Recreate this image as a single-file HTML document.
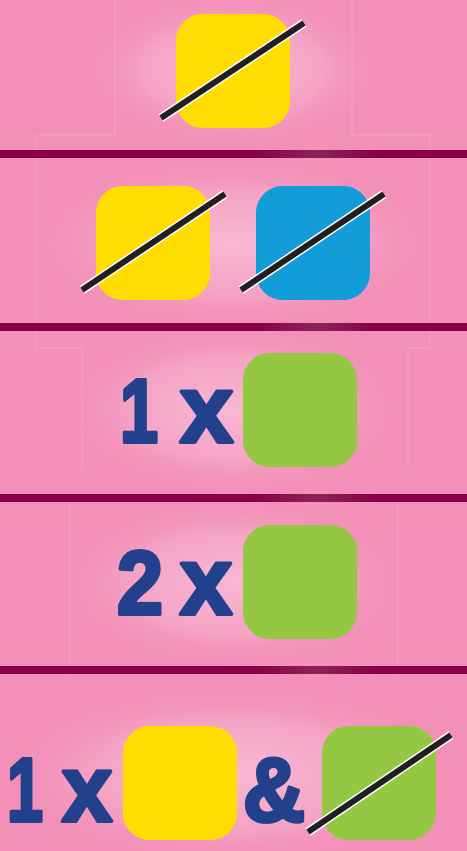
<!DOCTYPE html>
<html><head><style>
html,body{margin:0;padding:0;width:467px;height:851px;overflow:hidden;background:#f390b8}
svg{display:block}
</style></head><body>
<svg width="467" height="851" viewBox="0 0 467 851" xmlns="http://www.w3.org/2000/svg">
<defs>
<radialGradient id="g" cx="0.5" cy="0.5" r="0.5">
<stop offset="0" stop-color="#f8b8d2"/><stop offset="0.6" stop-color="#f5a3c5"/><stop offset="1" stop-color="#f390b8" stop-opacity="0"/>
</radialGradient>
<linearGradient id="bar" x1="0" x2="1">
<stop offset="0" stop-color="#8a0048"/><stop offset="0.55" stop-color="#8a0048"/><stop offset="0.68" stop-color="#8c2358"/><stop offset="0.8" stop-color="#8a0048"/><stop offset="1" stop-color="#8a0048"/>
</linearGradient>
</defs>
<rect width="467" height="851" fill="#f390b8"/>
<ellipse cx="233" cy="70" rx="150" ry="75" fill="url(#g)"/>
<ellipse cx="233" cy="243" rx="200" ry="85" fill="url(#g)"/>
<ellipse cx="233" cy="410" rx="170" ry="85" fill="url(#g)"/>
<ellipse cx="233" cy="583" rx="170" ry="85" fill="url(#g)"/>
<ellipse cx="233" cy="775" rx="230" ry="90" fill="url(#g)"/>
<g fill="none" stroke="#f7a9c9" stroke-width="1" opacity="0.7">
<path d="M115 0V135H36V348H82V470"/><path d="M352 0V135H430V348H408V470"/>
<path d="M70 495V675"/><path d="M398 495V675"/>
</g>
<rect x="0" y="150" width="467" height="8" fill="url(#bar)"/>
<rect x="0" y="323" width="467" height="8" fill="url(#bar)"/>
<rect x="0" y="494" width="467" height="8" fill="url(#bar)"/>
<rect x="0" y="666" width="467" height="8" fill="url(#bar)"/>
<g>
<rect x="176" y="14" width="114" height="114" rx="27" fill="#ffdd00"/>
<rect x="96" y="186" width="114" height="114" rx="27" fill="#ffdd00"/>
<rect x="256" y="186" width="114" height="114" rx="27" fill="#129cd8"/>
<rect x="243" y="353" width="114" height="114" rx="27" fill="#94c842"/>
<rect x="243" y="525" width="114" height="114" rx="27" fill="#94c842"/>
<rect x="123" y="726" width="114" height="114" rx="27" fill="#ffdd00"/>
<rect x="322" y="726" width="114" height="114" rx="27" fill="#94c842"/>
</g>
<g stroke-linecap="butt">
<g stroke="#fff" stroke-width="9">
<path d="M161 118L304 23"/><path d="M82 290L225 194"/><path d="M241 290L384 194"/><path d="M308 832L451 735"/>
</g>
<g stroke="#231f20" stroke-width="6">
<path d="M161 118L304 23"/><path d="M82 290L225 194"/><path d="M241 290L384 194"/><path d="M308 832L451 735"/>
</g>
</g>
<g fill="#22408c" stroke="#22408c" stroke-width="4" stroke-linejoin="round" font-family="Liberation Sans, sans-serif" font-weight="bold" font-size="90">
<text x="120" y="442" textLength="38" lengthAdjust="spacingAndGlyphs">1</text>
<text x="180" y="442" textLength="53" lengthAdjust="spacingAndGlyphs" font-size="96">x</text>
<text x="117" y="614" textLength="46" lengthAdjust="spacingAndGlyphs">2</text>
<text x="180" y="614" textLength="52" lengthAdjust="spacingAndGlyphs" font-size="96">x</text>
<text x="7" y="821" textLength="36" lengthAdjust="spacingAndGlyphs">1</text>
<text x="62" y="821" textLength="50" lengthAdjust="spacingAndGlyphs" font-size="94">x</text>
<text x="243" y="821" textLength="62" lengthAdjust="spacingAndGlyphs">&amp;</text>
</g>
</svg>
</body></html>
